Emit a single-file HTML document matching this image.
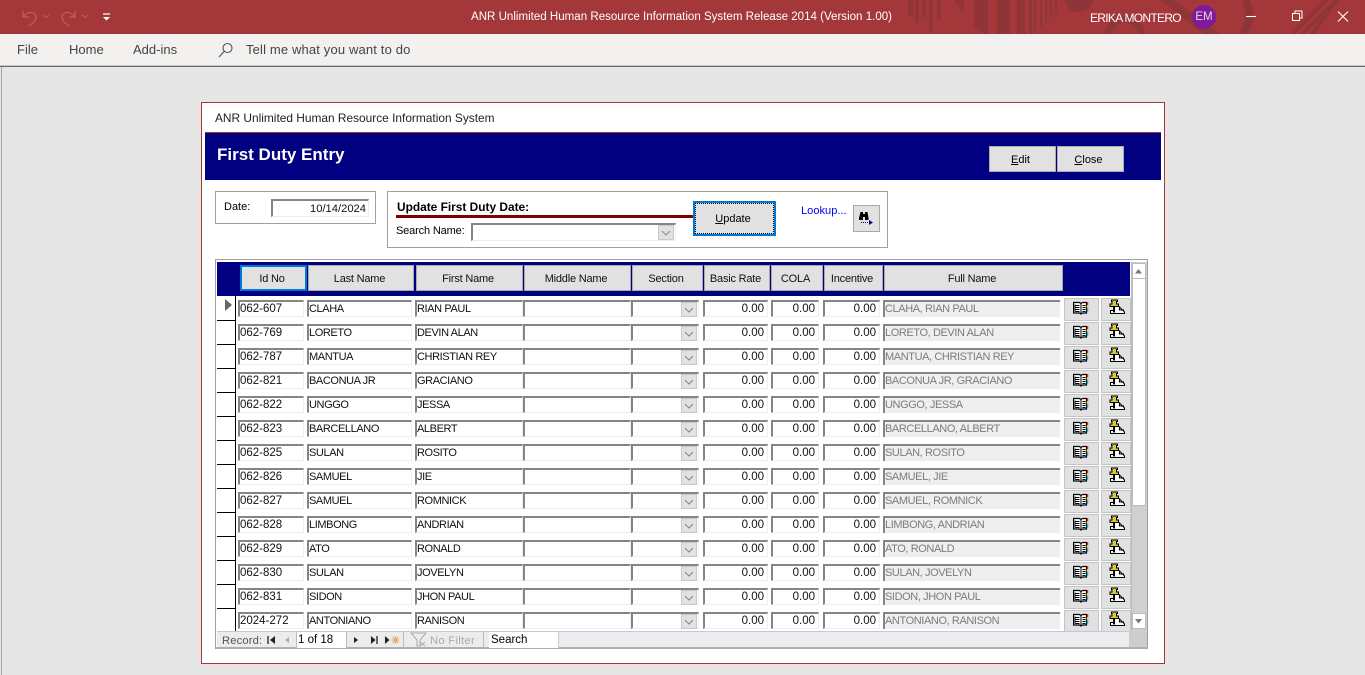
<!DOCTYPE html>
<html><head><meta charset="utf-8"><title>First Duty Entry</title>
<style>
html,body{margin:0;padding:0;width:1365px;height:675px;overflow:hidden;background:#e6e6e6;font-family:"Liberation Sans",sans-serif;color:#000}
div,span{position:absolute;box-sizing:border-box;white-space:nowrap}
svg{position:absolute;overflow:visible}
.t{font-size:11.5px;line-height:14px}
.rb{top:0;height:34px;color:#fff}
.mn{top:42px;font-size:13px;color:#444;line-height:16px}
.btn{background:#e1e1e1;border:1px solid #adadad;text-align:center;font-size:11px;padding-right:4px}
.h{position:absolute;top:265px;height:26px;background:#e1e1e1;border:1px solid #a8a8a8;text-align:center;font-size:11px;letter-spacing:-.2px;line-height:26px;color:#111;padding-right:3px}
.row{left:0;width:1365px;height:24px}
.f{top:0;height:17px;background:#fff;border-top:2px solid #858585;border-left:2px solid #858585;border-right:1px solid #eee;border-bottom:1px solid #eee;font-size:11px;letter-spacing:-.4px;line-height:14px;overflow:hidden;color:#111}
.a{left:238px;width:66px;font-size:11.5px;letter-spacing:0}.b{left:307px;width:105px}.c{left:415px;width:108px}.d{left:523px;width:108px}.e{left:631px;width:68px}
.n{text-align:right;padding-right:3px;font-size:11.5px;letter-spacing:0}
.g{left:703px;width:65px}.i{left:771px;width:48px}.j{left:823px;width:57px}
.k{left:883px;width:177px;background:#efefef;color:#7c7c7c;border-right:0;border-bottom:0}
.dd{left:681px;top:2px;width:16px;height:15px;background:#e1e1e1;border:1px solid #c8c8c8}
.bk,.pn{top:-2px;height:23px;background:#e1e1e1;border:1px solid #c4c4c4}
.bk{left:1064px;width:35px}.pn{left:1101px;width:30px}
.sel{left:217px;top:20px;width:18px;height:1px;background:#000}
</style></head><body>
<svg width="0" height="0" style="position:absolute"><defs>
<symbol id="book" viewBox="0 0 16 14"><path d="M.5 1.500h6l1.500 1 1.500-1h4v10.500h-4l-1.500 1-1.500-1h-6z" fill="#fff" stroke="#000" stroke-width="1.200"/><path d="M8 2.500v10M2 3.500v7M2 4.500h4.500M2 6.500h4.500M2 8.500h4.500M2 10.500h4.500M9.500 4.500h3M9.500 6.500h3M9.500 8.500h3M9.500 10.500h3" stroke="#000" stroke-width="1"/><path d="M14.500 1v3" stroke="#e02020" stroke-width="1.500"/><path d="M14.500 4v3" stroke="#e6d020" stroke-width="1.500"/><path d="M14.500 7v4" stroke="#20a8e0" stroke-width="1.500"/></symbol>
<symbol id="pin" viewBox="0 0 16 16"><path d="M7 7.500h3L15.500 13v1.500H1.500V11.500H4.500V7.500z" fill="#fff" stroke="#000"/><path d="M10.500 8v3H15" fill="none" stroke="#000"/><path d="M2.500 1h6v1.500H7.500V5H9.500V7.500H1V5H3V2.500H2.500z" fill="#d8c840" stroke="#000" stroke-width="1"/><path d="M5 7.500v6" stroke="#000" stroke-width="2"/></symbol>
</defs></svg>

<!-- title bar -->
<div style="left:0;top:0;width:1365px;height:34px;background:#a4373a;overflow:hidden">
<svg width="1365" height="34" style="left:0;top:0"><g fill="#8f3537">
<rect x="908" y="0" width="5" height="16"/><rect x="915" y="0" width="4" height="23"/><rect x="922" y="0" width="4" height="17"/><rect x="929" y="0" width="4" height="32"/><rect x="937" y="0" width="4" height="20"/>
<path d="M955 0h9l-1 12-8-10zM974 0h14v34h-3L974 26z"/><rect x="997" y="0" width="13" height="34"/>
<rect x="1017" y="0" width="4" height="34"/><rect x="1022" y="0" width="3" height="34"/><rect x="1029" y="0" width="3" height="34"/><rect x="1034" y="0" width="2" height="30"/><rect x="1040" y="0" width="2" height="26"/><rect x="1045" y="0" width="2" height="22"/><rect x="1050" y="0" width="2" height="18"/><rect x="1055" y="0" width="2" height="12"/>
<path d="M1065 0h28a14 12 0 0 1-28 0z"/>
<circle cx="1125" cy="36" r="17" fill="none" stroke="#8f3537" stroke-width="7"/>
<path d="M1160 0h14l46 34h-16zM1242 0h8q8 18-3 34h-8q10-16 3-34zM1290 34l34-34h5l-34 34zM1300 34l34-34h5l-34 34zM1310 34l24-34h5l-24 34z"/>
</g></svg>
</div>
<svg width="120" height="34" style="left:0;top:0" fill="none"><path d="M23 11v6h6M23.500 16.500C28 10 37 12 36 18c-.5 3-3 5-7 8" stroke="#c75a5d" stroke-width="1.200"/><path d="M43 15l3 2.500 3-2.500" stroke="#c75a5d"/><path d="M75 11v6h-6M74.500 16.500C70 10 61 12 62 18c.5 3 3 5 7 8" stroke="#c75a5d" stroke-width="1.200"/><path d="M82 15l3 2.500 3-2.500" stroke="#c75a5d"/><path d="M103 14h7" stroke="#fff" stroke-width="1.200"/><path d="M103 17h7l-3.500 3.500z" fill="#fff"/></svg>
<div class="rb" style="left:471px;font-size:11.55px;line-height:34px">ANR Unlimited Human Resource Information System Release 2014 (Version 1.00)</div>
<div class="rb" style="left:1090px;font-size:12px;letter-spacing:-.7px;line-height:36px">ERIKA MONTERO</div>
<div style="left:1192px;top:5px;width:24px;height:24px;border-radius:50%;background:#7f1a98;color:#e8d8ef;font-size:11.5px;line-height:24px;text-align:center">EM</div>
<svg width="120" height="34" style="left:1245px;top:0" fill="none" stroke="#fff"><path d="M1 16.500h10" stroke-width="1.100"/><path d="M47.500 13.500h7v7h-7zM50 13.500v-2.500h7v7h-2.500" stroke-width="1"/><path d="M93 11.500l10 10M103 11.500l-10 10" stroke-width="1.100"/></svg>

<!-- menu bar -->
<div style="left:0;top:34px;width:1365px;height:31px;background:#f2f1ef"></div>
<div style="left:0;top:65px;width:1365px;height:1px;background:#c8c8c8"></div>
<div style="left:0;top:66px;width:1365px;height:1px;background:#6a6a6a"></div>
<div style="left:1px;top:67px;width:1px;height:608px;background:#a8a8a8"></div>
<div class="mn" style="left:17px">File</div>
<div class="mn" style="left:69px">Home</div>
<div class="mn" style="left:133px">Add-ins</div>
<svg width="16" height="16" style="left:218px;top:42px" fill="none" stroke="#555"><circle cx="9.500" cy="6" r="4.500" stroke-width="1.100"/><path d="M6 9.500L1 15" stroke-width="1.200"/></svg>
<div class="mn" style="left:246px;letter-spacing:.15px">Tell me what you want to do</div>

<!-- form -->
<div style="left:201px;top:102px;width:964px;height:562px;background:#fff;border:1px solid #a4373a"></div>
<div class="t" style="left:215px;top:111px;font-size:11.9px;color:#222">ANR Unlimited Human Resource Information System</div>
<div style="left:205px;top:132px;width:956px;height:1px;background:#a4373a"></div>
<div style="left:205px;top:133px;width:956px;height:47px;background:#000080"></div>
<div style="left:217px;top:145px;color:#fff;font-size:17px;font-weight:bold;line-height:20px">First Duty Entry</div>
<div class="btn" style="left:989px;top:146px;width:67px;height:26px;line-height:26px"><u>E</u>dit</div>
<div class="btn" style="left:1057px;top:146px;width:67px;height:26px;line-height:26px"><u>C</u>lose</div>

<!-- date box -->
<div style="left:215px;top:191px;width:161px;height:33px;border:1px solid #a0a0a0"></div>
<div class="t" style="left:224px;top:200px;font-size:11px">Date:</div>
<div class="f n" style="left:271px;top:199px;width:98px;height:18px;padding-right:2px;line-height:16px;font-size:11.2px">10/14/2024</div>

<!-- update box -->
<div style="left:387px;top:191px;width:501px;height:57px;border:1px solid #a0a0a0"></div>
<div class="t" style="left:397px;top:200px;font-weight:bold;font-size:11.9px">Update First Duty Date:</div>
<div style="left:396px;top:215px;width:297px;height:3px;background:#800000"></div>
<div class="t" style="left:396px;top:224px;font-size:11px;letter-spacing:-.15px">Search Name:</div>
<div class="f" style="left:471px;top:223px;width:205px;height:18px"></div>
<div class="dd" style="left:658px;top:225px"><svg width="14" height="13" style="left:0;top:0" fill="none" stroke="#888"><path d="M3 5l4 4 4-4"/></svg></div>
<div class="btn" style="left:693px;top:201px;width:83px;height:35px;border:2px solid #0078d7;line-height:32px;padding-right:3px"><div style="left:0;top:0;right:0;bottom:0;border:1px dotted #000"></div><u>U</u>pdate</div>
<div class="t" style="left:801px;top:204px;color:#0000ee;font-size:11.1px">Lookup...</div>
<div style="left:853px;top:205px;width:27px;height:27px;background:#e1e1e1;border:1px solid #a8a8a8"></div>
<svg width="18" height="16" style="left:858px;top:210px"><path d="M1 8l1.500-6h2.500v2h2V2h2.500L10.500 8V10H7V7H5V10H1z" fill="#000"/><path d="M3 12.500h9" stroke="#000080" stroke-dasharray="1 1"/><path d="M11 10l4 2.500-4 2.500z" fill="#000080"/></svg>

<!-- subform -->
<div style="left:215px;top:259px;width:933px;height:390px;border:1px solid #a0a0a0;border-bottom:0;background:#fff"></div>
<div style="left:217px;top:262px;width:913px;height:34px;background:#000080"></div>
<div class="h" style="left:240px;width:67px;border:2px solid #0078d7;line-height:24px">Id No</div>
<div class="h" style="left:308px;width:106px">Last Name</div>
<div class="h" style="left:416px;width:107px">First Name</div>
<div class="h" style="left:524px;width:107px">Middle Name</div>
<div class="h" style="left:632px;width:71px">Section</div>
<div class="h" style="left:704px;width:66px">Basic Rate</div>
<div class="h" style="left:771px;width:52px">COLA</div>
<div class="h" style="left:824px;width:59px">Incentive</div>
<div class="h" style="left:884px;width:179px">Full Name</div>

<div style="left:235px;top:296px;width:1px;height:335px;background:#000"></div>
<svg width="8" height="12" style="left:225px;top:299px"><path d="M0 0l7 6-7 6z" fill="#666"/></svg>

<div class="row" style="top:300px"><div class="sel"></div><div class="f a">062-607</div><div class="f b">CLAHA</div><div class="f c">RIAN PAUL</div><div class="f d"></div><div class="f e"></div><div class="dd"><svg width="14" height="13" style="left:0;top:0" fill="none" stroke="#888"><path d="M3 5l4 4 4-4"/></svg></div><div class="f g n">0.00</div><div class="f i n">0.00</div><div class="f j n">0.00</div><div class="f k">CLAHA, RIAN PAUL</div><div class="bk"><svg width="16" height="14" style="left:8px;top:2px"><use href="#book"/></svg></div><div class="pn"><svg width="16" height="16" style="left:7px;top:0"><use href="#pin"/></svg></div></div>
<div class="row" style="top:324px"><div class="sel"></div><div class="f a">062-769</div><div class="f b">LORETO</div><div class="f c">DEVIN ALAN</div><div class="f d"></div><div class="f e"></div><div class="dd"><svg width="14" height="13" style="left:0;top:0" fill="none" stroke="#888"><path d="M3 5l4 4 4-4"/></svg></div><div class="f g n">0.00</div><div class="f i n">0.00</div><div class="f j n">0.00</div><div class="f k">LORETO, DEVIN ALAN</div><div class="bk"><svg width="16" height="14" style="left:8px;top:2px"><use href="#book"/></svg></div><div class="pn"><svg width="16" height="16" style="left:7px;top:0"><use href="#pin"/></svg></div></div>
<div class="row" style="top:348px"><div class="sel"></div><div class="f a">062-787</div><div class="f b">MANTUA</div><div class="f c">CHRISTIAN REY</div><div class="f d"></div><div class="f e"></div><div class="dd"><svg width="14" height="13" style="left:0;top:0" fill="none" stroke="#888"><path d="M3 5l4 4 4-4"/></svg></div><div class="f g n">0.00</div><div class="f i n">0.00</div><div class="f j n">0.00</div><div class="f k">MANTUA, CHRISTIAN REY</div><div class="bk"><svg width="16" height="14" style="left:8px;top:2px"><use href="#book"/></svg></div><div class="pn"><svg width="16" height="16" style="left:7px;top:0"><use href="#pin"/></svg></div></div>
<div class="row" style="top:372px"><div class="sel"></div><div class="f a">062-821</div><div class="f b">BACONUA JR</div><div class="f c">GRACIANO</div><div class="f d"></div><div class="f e"></div><div class="dd"><svg width="14" height="13" style="left:0;top:0" fill="none" stroke="#888"><path d="M3 5l4 4 4-4"/></svg></div><div class="f g n">0.00</div><div class="f i n">0.00</div><div class="f j n">0.00</div><div class="f k">BACONUA JR, GRACIANO</div><div class="bk"><svg width="16" height="14" style="left:8px;top:2px"><use href="#book"/></svg></div><div class="pn"><svg width="16" height="16" style="left:7px;top:0"><use href="#pin"/></svg></div></div>
<div class="row" style="top:396px"><div class="sel"></div><div class="f a">062-822</div><div class="f b">UNGGO</div><div class="f c">JESSA</div><div class="f d"></div><div class="f e"></div><div class="dd"><svg width="14" height="13" style="left:0;top:0" fill="none" stroke="#888"><path d="M3 5l4 4 4-4"/></svg></div><div class="f g n">0.00</div><div class="f i n">0.00</div><div class="f j n">0.00</div><div class="f k">UNGGO, JESSA</div><div class="bk"><svg width="16" height="14" style="left:8px;top:2px"><use href="#book"/></svg></div><div class="pn"><svg width="16" height="16" style="left:7px;top:0"><use href="#pin"/></svg></div></div>
<div class="row" style="top:420px"><div class="sel"></div><div class="f a">062-823</div><div class="f b">BARCELLANO</div><div class="f c">ALBERT</div><div class="f d"></div><div class="f e"></div><div class="dd"><svg width="14" height="13" style="left:0;top:0" fill="none" stroke="#888"><path d="M3 5l4 4 4-4"/></svg></div><div class="f g n">0.00</div><div class="f i n">0.00</div><div class="f j n">0.00</div><div class="f k">BARCELLANO, ALBERT</div><div class="bk"><svg width="16" height="14" style="left:8px;top:2px"><use href="#book"/></svg></div><div class="pn"><svg width="16" height="16" style="left:7px;top:0"><use href="#pin"/></svg></div></div>
<div class="row" style="top:444px"><div class="sel"></div><div class="f a">062-825</div><div class="f b">SULAN</div><div class="f c">ROSITO</div><div class="f d"></div><div class="f e"></div><div class="dd"><svg width="14" height="13" style="left:0;top:0" fill="none" stroke="#888"><path d="M3 5l4 4 4-4"/></svg></div><div class="f g n">0.00</div><div class="f i n">0.00</div><div class="f j n">0.00</div><div class="f k">SULAN, ROSITO</div><div class="bk"><svg width="16" height="14" style="left:8px;top:2px"><use href="#book"/></svg></div><div class="pn"><svg width="16" height="16" style="left:7px;top:0"><use href="#pin"/></svg></div></div>
<div class="row" style="top:468px"><div class="sel"></div><div class="f a">062-826</div><div class="f b">SAMUEL</div><div class="f c">JIE</div><div class="f d"></div><div class="f e"></div><div class="dd"><svg width="14" height="13" style="left:0;top:0" fill="none" stroke="#888"><path d="M3 5l4 4 4-4"/></svg></div><div class="f g n">0.00</div><div class="f i n">0.00</div><div class="f j n">0.00</div><div class="f k">SAMUEL, JIE</div><div class="bk"><svg width="16" height="14" style="left:8px;top:2px"><use href="#book"/></svg></div><div class="pn"><svg width="16" height="16" style="left:7px;top:0"><use href="#pin"/></svg></div></div>
<div class="row" style="top:492px"><div class="sel"></div><div class="f a">062-827</div><div class="f b">SAMUEL</div><div class="f c">ROMNICK</div><div class="f d"></div><div class="f e"></div><div class="dd"><svg width="14" height="13" style="left:0;top:0" fill="none" stroke="#888"><path d="M3 5l4 4 4-4"/></svg></div><div class="f g n">0.00</div><div class="f i n">0.00</div><div class="f j n">0.00</div><div class="f k">SAMUEL, ROMNICK</div><div class="bk"><svg width="16" height="14" style="left:8px;top:2px"><use href="#book"/></svg></div><div class="pn"><svg width="16" height="16" style="left:7px;top:0"><use href="#pin"/></svg></div></div>
<div class="row" style="top:516px"><div class="sel"></div><div class="f a">062-828</div><div class="f b">LIMBONG</div><div class="f c">ANDRIAN</div><div class="f d"></div><div class="f e"></div><div class="dd"><svg width="14" height="13" style="left:0;top:0" fill="none" stroke="#888"><path d="M3 5l4 4 4-4"/></svg></div><div class="f g n">0.00</div><div class="f i n">0.00</div><div class="f j n">0.00</div><div class="f k">LIMBONG, ANDRIAN</div><div class="bk"><svg width="16" height="14" style="left:8px;top:2px"><use href="#book"/></svg></div><div class="pn"><svg width="16" height="16" style="left:7px;top:0"><use href="#pin"/></svg></div></div>
<div class="row" style="top:540px"><div class="sel"></div><div class="f a">062-829</div><div class="f b">ATO</div><div class="f c">RONALD</div><div class="f d"></div><div class="f e"></div><div class="dd"><svg width="14" height="13" style="left:0;top:0" fill="none" stroke="#888"><path d="M3 5l4 4 4-4"/></svg></div><div class="f g n">0.00</div><div class="f i n">0.00</div><div class="f j n">0.00</div><div class="f k">ATO, RONALD</div><div class="bk"><svg width="16" height="14" style="left:8px;top:2px"><use href="#book"/></svg></div><div class="pn"><svg width="16" height="16" style="left:7px;top:0"><use href="#pin"/></svg></div></div>
<div class="row" style="top:564px"><div class="sel"></div><div class="f a">062-830</div><div class="f b">SULAN</div><div class="f c">JOVELYN</div><div class="f d"></div><div class="f e"></div><div class="dd"><svg width="14" height="13" style="left:0;top:0" fill="none" stroke="#888"><path d="M3 5l4 4 4-4"/></svg></div><div class="f g n">0.00</div><div class="f i n">0.00</div><div class="f j n">0.00</div><div class="f k">SULAN, JOVELYN</div><div class="bk"><svg width="16" height="14" style="left:8px;top:2px"><use href="#book"/></svg></div><div class="pn"><svg width="16" height="16" style="left:7px;top:0"><use href="#pin"/></svg></div></div>
<div class="row" style="top:588px"><div class="sel"></div><div class="f a">062-831</div><div class="f b">SIDON</div><div class="f c">JHON PAUL</div><div class="f d"></div><div class="f e"></div><div class="dd"><svg width="14" height="13" style="left:0;top:0" fill="none" stroke="#888"><path d="M3 5l4 4 4-4"/></svg></div><div class="f g n">0.00</div><div class="f i n">0.00</div><div class="f j n">0.00</div><div class="f k">SIDON, JHON PAUL</div><div class="bk"><svg width="16" height="14" style="left:8px;top:2px"><use href="#book"/></svg></div><div class="pn"><svg width="16" height="16" style="left:7px;top:0"><use href="#pin"/></svg></div></div>
<div class="row" style="top:612px"><div class="f a">2024-272</div><div class="f b">ANTONIANO</div><div class="f c">RANISON</div><div class="f d"></div><div class="f e"></div><div class="dd"><svg width="14" height="13" style="left:0;top:0" fill="none" stroke="#888"><path d="M3 5l4 4 4-4"/></svg></div><div class="f g n">0.00</div><div class="f i n">0.00</div><div class="f j n">0.00</div><div class="f k">ANTONIANO, RANISON</div><div class="bk"><svg width="16" height="14" style="left:8px;top:2px"><use href="#book"/></svg></div><div class="pn"><svg width="16" height="16" style="left:7px;top:0"><use href="#pin"/></svg></div></div>

<!-- scrollbar -->
<div style="left:1131px;top:262px;width:16px;height:369px;background:#d0d0d0;border-left:1px solid #bbb"></div>
<div style="left:1132px;top:278px;width:14px;height:228px;background:#fff;border:1px solid #bbb"></div>
<div style="left:1132px;top:263px;width:14px;height:16px;background:#fff;border:1px solid #bbb"></div>
<svg width="8" height="5" style="left:1135px;top:269px"><path d="M0 4.500L3.500 0 7 4.500z" fill="#777"/></svg>
<div style="left:1132px;top:613px;width:14px;height:16px;background:#fff;border:1px solid #bbb"></div>
<svg width="8" height="5" style="left:1135px;top:619px"><path d="M0 0L3.500 4.500 7 0z" fill="#777"/></svg>

<!-- record bar -->
<div style="left:217px;top:631px;width:912px;height:17px;background:#ebecef;border-top:1px solid #c8c8c8"></div>
<div style="left:1129px;top:631px;width:18px;height:16px;background:#ccc"></div>
<div style="left:216px;top:647px;width:932px;height:2px;background:#b0b0b0"></div>
<div class="t" style="left:222px;top:634px;font-size:11.2px;color:#555;letter-spacing:.15px">Record:</div>
<svg width="120" height="12" style="left:267px;top:635px"><path d="M1 1v8" stroke="#222" stroke-width="1.300"/><path d="M8 1L3 5l5 4z" fill="#222"/><path d="M22 2l-4 3 4 3z" fill="#aaa"/><path d="M87 2l4 3-4 3z" fill="#222"/><path d="M104 1l4.500 4-4.500 4z" fill="#222"/><path d="M110 1v8" stroke="#222" stroke-width="1.300"/></svg>
<div style="left:296px;top:632px;width:51px;height:16px;background:#fff;border-right:1px solid #bbb;border-left:1px solid #bbb;font-size:11.5px;line-height:16px;padding-left:1px">1 of 18</div>
<svg width="16" height="12" style="left:385px;top:635px"><path d="M0 1l4.500 4L0 9z" fill="#222"/><path d="M10.500 1v8M6.500 5h8M7.500 2l6 6M13.500 2l-6 6" stroke="#e8a848" stroke-width="1"/></svg>
<div style="left:403px;top:631px;width:1px;height:17px;background:#bbb"></div>
<svg width="18" height="15" style="left:410px;top:632px" fill="none" stroke="#aaa"><path d="M1 1h15L10 8v6H7V8z"/><path d="M10 10l5 4M15 10l-5 4"/></svg>
<div class="t" style="left:430px;top:634px;color:#aaa;letter-spacing:.3px;font-size:11.2px">No Filter</div>
<div style="left:483px;top:631px;width:1px;height:17px;background:#bbb"></div>
<div style="left:489px;top:632px;width:70px;height:16px;background:#fff;border-right:1px solid #ccc;font-size:11.5px;line-height:16px;padding-left:2px">Search</div>
</body></html>
